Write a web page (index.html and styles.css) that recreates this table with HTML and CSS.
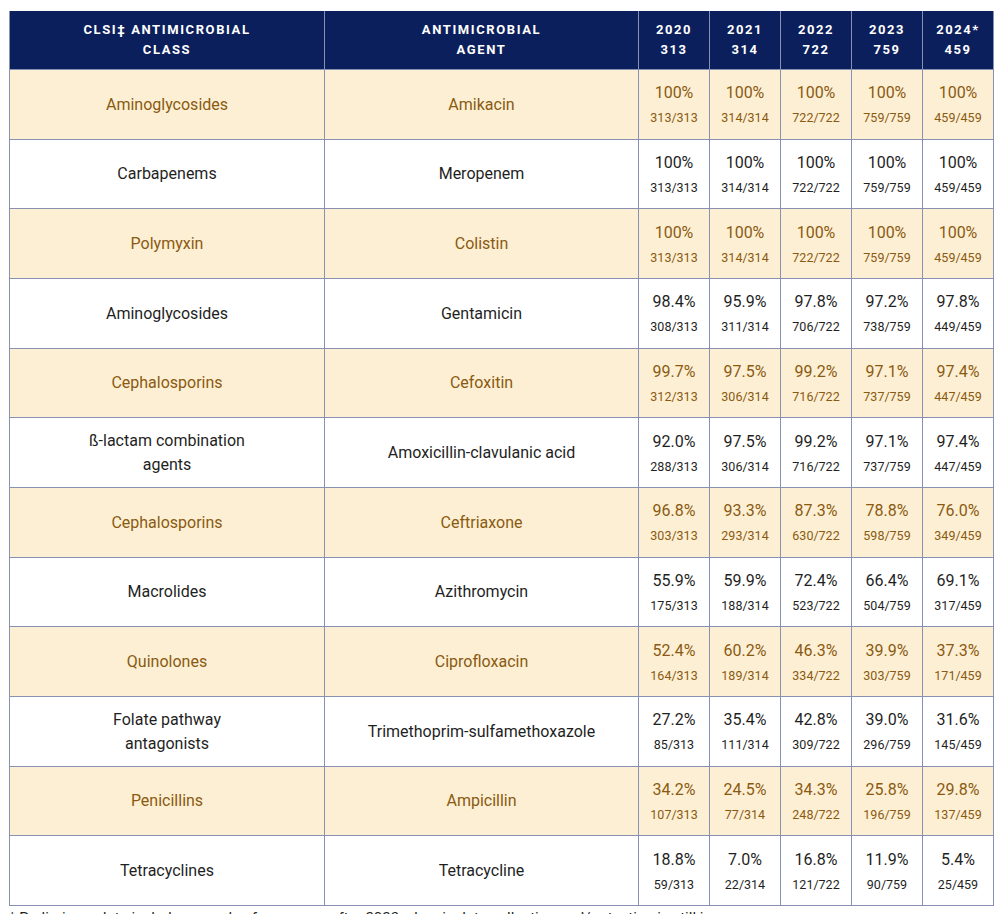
FILE: index.html
```html
<!DOCTYPE html>
<html>
<head>
<meta charset="utf-8">
<link rel="stylesheet" href="styles.css">
</head>
<body>
<table class="amr">
<colgroup>
<col class="c-class"><col class="c-agent"><col class="c-yr"><col class="c-yr"><col class="c-yr"><col class="c-yr"><col class="c-yr">
</colgroup>
<thead>
<tr><th>CLSI‡ ANTIMICROBIAL<br>CLASS</th><th>ANTIMICROBIAL<br>AGENT</th><th>2020<br>313</th><th>2021<br>314</th><th>2022<br>722</th><th>2023<br>759</th><th>2024*<br>459</th></tr>
</thead>
<tbody>
<tr class="hl"><td>Aminoglycosides</td><td>Amikacin</td>
<td><div class="p">100%</div><div class="f">313/313</div></td><td><div class="p">100%</div><div class="f">314/314</div></td><td><div class="p">100%</div><div class="f">722/722</div></td><td><div class="p">100%</div><div class="f">759/759</div></td><td><div class="p">100%</div><div class="f">459/459</div></td></tr>
<tr><td>Carbapenems</td><td>Meropenem</td>
<td><div class="p">100%</div><div class="f">313/313</div></td><td><div class="p">100%</div><div class="f">314/314</div></td><td><div class="p">100%</div><div class="f">722/722</div></td><td><div class="p">100%</div><div class="f">759/759</div></td><td><div class="p">100%</div><div class="f">459/459</div></td></tr>
<tr class="hl"><td>Polymyxin</td><td>Colistin</td>
<td><div class="p">100%</div><div class="f">313/313</div></td><td><div class="p">100%</div><div class="f">314/314</div></td><td><div class="p">100%</div><div class="f">722/722</div></td><td><div class="p">100%</div><div class="f">759/759</div></td><td><div class="p">100%</div><div class="f">459/459</div></td></tr>
<tr><td>Aminoglycosides</td><td>Gentamicin</td>
<td><div class="p">98.4%</div><div class="f">308/313</div></td><td><div class="p">95.9%</div><div class="f">311/314</div></td><td><div class="p">97.8%</div><div class="f">706/722</div></td><td><div class="p">97.2%</div><div class="f">738/759</div></td><td><div class="p">97.8%</div><div class="f">449/459</div></td></tr>
<tr class="hl"><td>Cephalosporins</td><td>Cefoxitin</td>
<td><div class="p">99.7%</div><div class="f">312/313</div></td><td><div class="p">97.5%</div><div class="f">306/314</div></td><td><div class="p">99.2%</div><div class="f">716/722</div></td><td><div class="p">97.1%</div><div class="f">737/759</div></td><td><div class="p">97.4%</div><div class="f">447/459</div></td></tr>
<tr><td>ß-lactam combination<br>agents</td><td>Amoxicillin-clavulanic acid</td>
<td><div class="p">92.0%</div><div class="f">288/313</div></td><td><div class="p">97.5%</div><div class="f">306/314</div></td><td><div class="p">99.2%</div><div class="f">716/722</div></td><td><div class="p">97.1%</div><div class="f">737/759</div></td><td><div class="p">97.4%</div><div class="f">447/459</div></td></tr>
<tr class="hl"><td>Cephalosporins</td><td>Ceftriaxone</td>
<td><div class="p">96.8%</div><div class="f">303/313</div></td><td><div class="p">93.3%</div><div class="f">293/314</div></td><td><div class="p">87.3%</div><div class="f">630/722</div></td><td><div class="p">78.8%</div><div class="f">598/759</div></td><td><div class="p">76.0%</div><div class="f">349/459</div></td></tr>
<tr><td>Macrolides</td><td>Azithromycin</td>
<td><div class="p">55.9%</div><div class="f">175/313</div></td><td><div class="p">59.9%</div><div class="f">188/314</div></td><td><div class="p">72.4%</div><div class="f">523/722</div></td><td><div class="p">66.4%</div><div class="f">504/759</div></td><td><div class="p">69.1%</div><div class="f">317/459</div></td></tr>
<tr class="hl"><td>Quinolones</td><td>Ciprofloxacin</td>
<td><div class="p">52.4%</div><div class="f">164/313</div></td><td><div class="p">60.2%</div><div class="f">189/314</div></td><td><div class="p">46.3%</div><div class="f">334/722</div></td><td><div class="p">39.9%</div><div class="f">303/759</div></td><td><div class="p">37.3%</div><div class="f">171/459</div></td></tr>
<tr><td>Folate pathway<br>antagonists</td><td>Trimethoprim-sulfamethoxazole</td>
<td><div class="p">27.2%</div><div class="f">85/313</div></td><td><div class="p">35.4%</div><div class="f">111/314</div></td><td><div class="p">42.8%</div><div class="f">309/722</div></td><td><div class="p">39.0%</div><div class="f">296/759</div></td><td><div class="p">31.6%</div><div class="f">145/459</div></td></tr>
<tr class="hl"><td>Penicillins</td><td>Ampicillin</td>
<td><div class="p">34.2%</div><div class="f">107/313</div></td><td><div class="p">24.5%</div><div class="f">77/314</div></td><td><div class="p">34.3%</div><div class="f">248/722</div></td><td><div class="p">25.8%</div><div class="f">196/759</div></td><td><div class="p">29.8%</div><div class="f">137/459</div></td></tr>
<tr><td>Tetracyclines</td><td>Tetracycline</td>
<td><div class="p">18.8%</div><div class="f">59/313</div></td><td><div class="p">7.0%</div><div class="f">22/314</div></td><td><div class="p">16.8%</div><div class="f">121/722</div></td><td><div class="p">11.9%</div><div class="f">90/759</div></td><td><div class="p">5.4%</div><div class="f">25/459</div></td></tr>
</tbody>
</table>
<p class="note">* Preliminary data includes samples from cases after 2023 when isolate collection and/or testing is still in progress.</p>
</body>
</html>
```
FILE: styles.css
```css
html, body {
  margin: 0;
  padding: 0;
  background: #ffffff;
}
body {
  padding: 11px 7px 0 9px;
  font-family: Roboto, "Liberation Sans", sans-serif;
  color: #1f1f1f;
}
.amr {
  width: 985px;
  border-collapse: collapse;
  table-layout: fixed;
}
.c-class { width: 315px; }
.c-agent { width: 314px; }
.c-yr { width: 71px; }
.amr th {
  background: #0b1f5c;
  color: #ffffff;
  font-size: 13px;
  font-weight: 700;
  letter-spacing: 1.6px;
  line-height: 20px;
  height: 58px;
  padding: 0;
  text-align: center;
  vertical-align: middle;
  border: 1px solid #8890b3;
  border-top: none;
}
.amr td {
  height: 67.67px;
  padding: 1px 0 0;
  text-align: center;
  vertical-align: middle;
  font-size: 16px;
  line-height: 24px;
  border: 1px solid #8890b3;
}
.amr tr.hl td {
  background: #fdefd3;
  color: #8a5a12;
}
.p {
  font-size: 16px;
  line-height: 22px;
}
.f {
  font-size: 12.5px;
  line-height: 18px;
  margin-top: 5px;
}
.note {
  margin: 0;
  padding-top: 3px;
  font-size: 15px;
  line-height: 18px;
  color: #1f1f1f;
}
```
